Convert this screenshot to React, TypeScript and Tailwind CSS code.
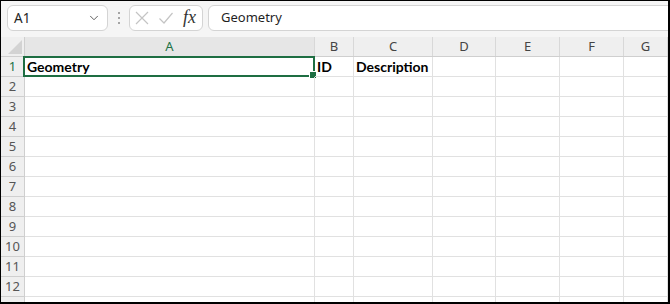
import { ChevronDown } from "lucide-react";

const cols = [
  { id: "A", w: "w-[290px]" },
  { id: "B", w: "w-[39px]" },
  { id: "C", w: "w-[79px]" },
  { id: "D", w: "w-[63px]" },
  { id: "E", w: "w-[64px]" },
  { id: "F", w: "w-[64px]" },
  { id: "G", w: "flex-1" },
];

const rows = Array.from({ length: 13 }, (_, i) => i + 1);

const cellData: Record<string, string> = {
  A1: "Geometry",
  B1: "ID",
  C1: "Description",
};

function Toolbar() {
  return (
    <div className="flex items-start h-[36px] shrink-0 bg-[#f5f5f5] pt-[4px] pl-[6px] font-['Noto_Sans',sans-serif] overflow-hidden">
      {/* name box */}
      <div className="flex items-center justify-between w-[101px] h-[26px] bg-white border border-[#d4d4d4] rounded-[6px] pl-[6px] pr-[6px] text-[13.5px] text-[#1f1f1f]">
        <span>A1</span>
        <ChevronDown className="w-[14px] h-[14px] text-[#555]" strokeWidth={1.6} />
      </div>
      {/* grip dots */}
      <div className="flex flex-col items-center justify-center gap-[3px] w-[21px] h-[26px]">
        <span className="w-[2px] h-[2px] bg-[#8a8a8a] rounded-full" />
        <span className="w-[2px] h-[2px] bg-[#8a8a8a] rounded-full" />
        <span className="w-[2px] h-[2px] bg-[#8a8a8a] rounded-full" />
      </div>
      {/* cancel / enter / fx */}
      <div className="flex items-center w-[74px] h-[26px] bg-white border border-[#d4d4d4] rounded-[6px] pl-[3px]">
        <svg width="16" height="16" viewBox="0 0 16 16" className="ml-[1px]">
          <path d="M2 2 L14 14 M14 2 L2 14" stroke="#c4c4c4" strokeWidth="1.2" fill="none" />
        </svg>
        <svg width="16" height="16" viewBox="0 0 16 16" className="ml-[8px]">
          <path d="M1.5 8.5 L6 13 L14.5 3" stroke="#c4c4c4" strokeWidth="1.2" fill="none" />
        </svg>
        <span className="ml-[9px] font-['Liberation_Serif',serif] italic text-[18px] leading-none text-[#333] -mt-[2px]">
          fx
        </span>
      </div>
      {/* formula input */}
      <div className="flex items-center flex-1 h-[26px] ml-[5px] -mr-[10px] bg-white border border-[#d4d4d4] rounded-[6px] pl-[12px] text-[13px] text-[#1f1f1f]">
        Geometry
      </div>
    </div>
  );
}

function HeaderRow() {
  return (
    <div className="flex h-[20px] shrink-0 bg-[#efefef] border-b border-[#cfcfcf] text-[13px] font-['Noto_Sans',sans-serif]">
      <div className="relative w-[24px] shrink-0 border-r border-[#cfcfcf]">
        <svg width="14" height="14" viewBox="0 0 14 14" className="absolute right-[2px] bottom-[2px]">
          <polygon points="14,0 14,14 0,14" fill="#d3d3d3" />
        </svg>
      </div>
      {cols.map((c) => (
        <div
          key={c.id}
          className={`${c.w} shrink-0 flex items-center justify-center border-r border-[#d8d8d8] ${
            c.id === "A" ? "bg-[#e6e6e6] text-[#217346]" : "text-[#444]"
          }`}
        >
          {c.id}
        </div>
      ))}
    </div>
  );
}

function Row({ n }: { n: number }) {
  return (
    <div className="flex h-[20px] shrink-0">
      <div
        className={`w-[24px] shrink-0 flex items-center justify-center bg-[#efefef] border-r border-b border-[#cfcfcf] text-[13px] font-['Noto_Sans',sans-serif] ${
          n === 1 ? "text-[#217346]" : "text-[#555]"
        }`}
      >
        {n < 13 ? n : ""}
      </div>
      {cols.map((c) => {
        const key = `${c.id}${n}`;
        const val = cellData[key];
        return (
          <div
            key={key}
            className={`${c.w} shrink-0 relative flex items-end pb-[2px] border-r border-b border-[#e1e1e1] font-['Lato',sans-serif] font-bold text-[14px] text-black pl-[2px] leading-none`}
          >
            {val}
            {key === "A1" && (
              <>
                <div className="absolute -left-[2px] -top-[1px] -right-[1px] -bottom-[1px] border-2 border-[#1e6e42]" />
                <div className="absolute -right-[3px] -bottom-[3px] w-[6px] h-[6px] bg-[#1e6e42] border border-white box-content" />
              </>
            )}
          </div>
        );
      })}
    </div>
  );
}

export default function App() {
  return (
    <div className="w-[670px] h-[304px] bg-white border-t border-l border-r-2 border-b-2 border-black overflow-hidden flex flex-col">
      <Toolbar />
      <HeaderRow />
      <div className="flex flex-col">
        {rows.map((n) => (
          <Row key={n} n={n} />
        ))}
      </div>
    </div>
  );
}
